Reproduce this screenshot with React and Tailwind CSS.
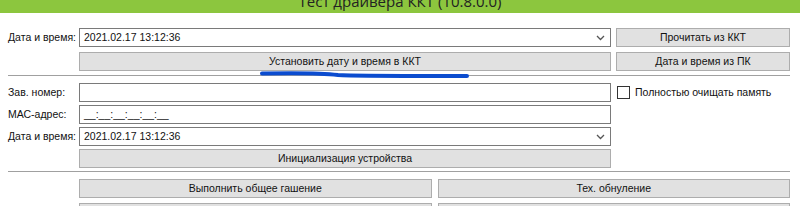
const font = { fontFamily: '"Liberation Sans", Arial, sans-serif' }

function Btn({ children, className = '' }) {
  return (
    <div
      className={
        'flex h-[19px] items-center justify-center whitespace-nowrap border border-[#adadad] bg-[#e1e1e1] text-[10.5px] leading-none text-[#111] ' +
        className
      }
    >
      {children}
    </div>
  )
}

function Field({ children, combo = false }) {
  return (
    <div className="flex h-[19px] flex-1 items-center border border-[#7a7a7a] bg-white pl-[4px] pr-[4px] text-[10.5px] leading-none text-[#111]">
      <span className="flex-1 whitespace-nowrap">{children}</span>
      {combo && (
        <svg width="9" height="6" viewBox="0 0 9 6" className="mr-[1px]">
          <path d="M1 1 L4.5 4.5 L8 1" fill="none" stroke="#555" strokeWidth="1.3" />
        </svg>
      )}
    </div>
  )
}

function Row({ label, children, className = '' }) {
  return (
    <div className={'flex h-[19px] items-center ' + className}>
      <div className="w-[71px] shrink-0 whitespace-nowrap text-[10.5px] leading-none text-[#111]">{label}</div>
      {children}
    </div>
  )
}

export default function App() {
  return (
    <div className="relative h-[206px] w-[800px] overflow-hidden bg-white" style={font}>
      <div className="flex h-[13px] justify-center overflow-hidden bg-[#8cc63e]">
        <div className="mt-[-9px] whitespace-nowrap text-[15px] leading-[20px] text-[#222]" style={{ fontFamily: '"Open Sans", "DejaVu Sans", sans-serif' }}>
          Тест драйвера ККТ (10.8.0.0)
        </div>
      </div>

      <div className="pl-[8px] pr-[10px] pt-[15px]">
        <Row label="Дата и время:">
          <div className="flex flex-1 gap-[5px]">
            <Field combo>2021.02.17 13:12:36</Field>
            <Btn className="w-[174px]">Прочитать из ККТ</Btn>
          </div>
        </Row>
        <Row label="" className="mt-[5px]">
          <div className="flex flex-1 gap-[5px]">
            <Btn className="flex-1">Установить дату и время в ККТ</Btn>
            <Btn className="w-[174px]">Дата и время из ПК</Btn>
          </div>
        </Row>
        <div className="mt-[4px] h-[2px] border-t border-[#a0a0a0]" />

        <div className="mt-[6px] flex gap-[5px]">
          <div className="flex flex-1 flex-col gap-[3px]">
            <Row label="Зав. номер:">
              <Field />
            </Row>
            <Row label="МАС-адрес:">
              <Field>__:__:__:__:__:__</Field>
            </Row>
            <Row label="Дата и время:">
              <Field combo>2021.02.17 13:12:36</Field>
            </Row>
            <Row label="">
              <Btn className="flex-1">Инициализация устройства</Btn>
            </Row>
          </div>
          <div className="w-[174px]">
            <div className="flex h-[19px] items-center gap-[5px] pl-[1px]">
              <div className="h-[13px] w-[13px] border border-[#333] bg-white" />
              <span className="whitespace-nowrap text-[10.5px] leading-none text-[#111]">Полностью очищать память</span>
            </div>
          </div>
        </div>

        <div className="mt-[3px] h-[2px] border-t border-[#a0a0a0]" />

        <Row label="" className="mt-[6px]">
          <div className="grid flex-1 grid-cols-2 gap-[6px]">
            <Btn>Выполнить общее гашение</Btn>
            <Btn>Тех. обнуление</Btn>
          </div>
        </Row>
        <Row label="" className="mt-[5px]">
          <div className="grid flex-1 grid-cols-2 gap-[6px]">
            <Btn />
            <Btn />
          </div>
        </Row>
      </div>

      <svg className="absolute left-0 top-0" width="800" height="206" viewBox="0 0 800 206" pointerEvents="none">
        <path
          d="M262 73.5 C300 72.8 320 72.8 338 75 C350 76 380 76 467 76"
          fill="none"
          stroke="#0b4ccf"
          strokeWidth="4"
          strokeLinecap="round"
        />
      </svg>
    </div>
  )
}
